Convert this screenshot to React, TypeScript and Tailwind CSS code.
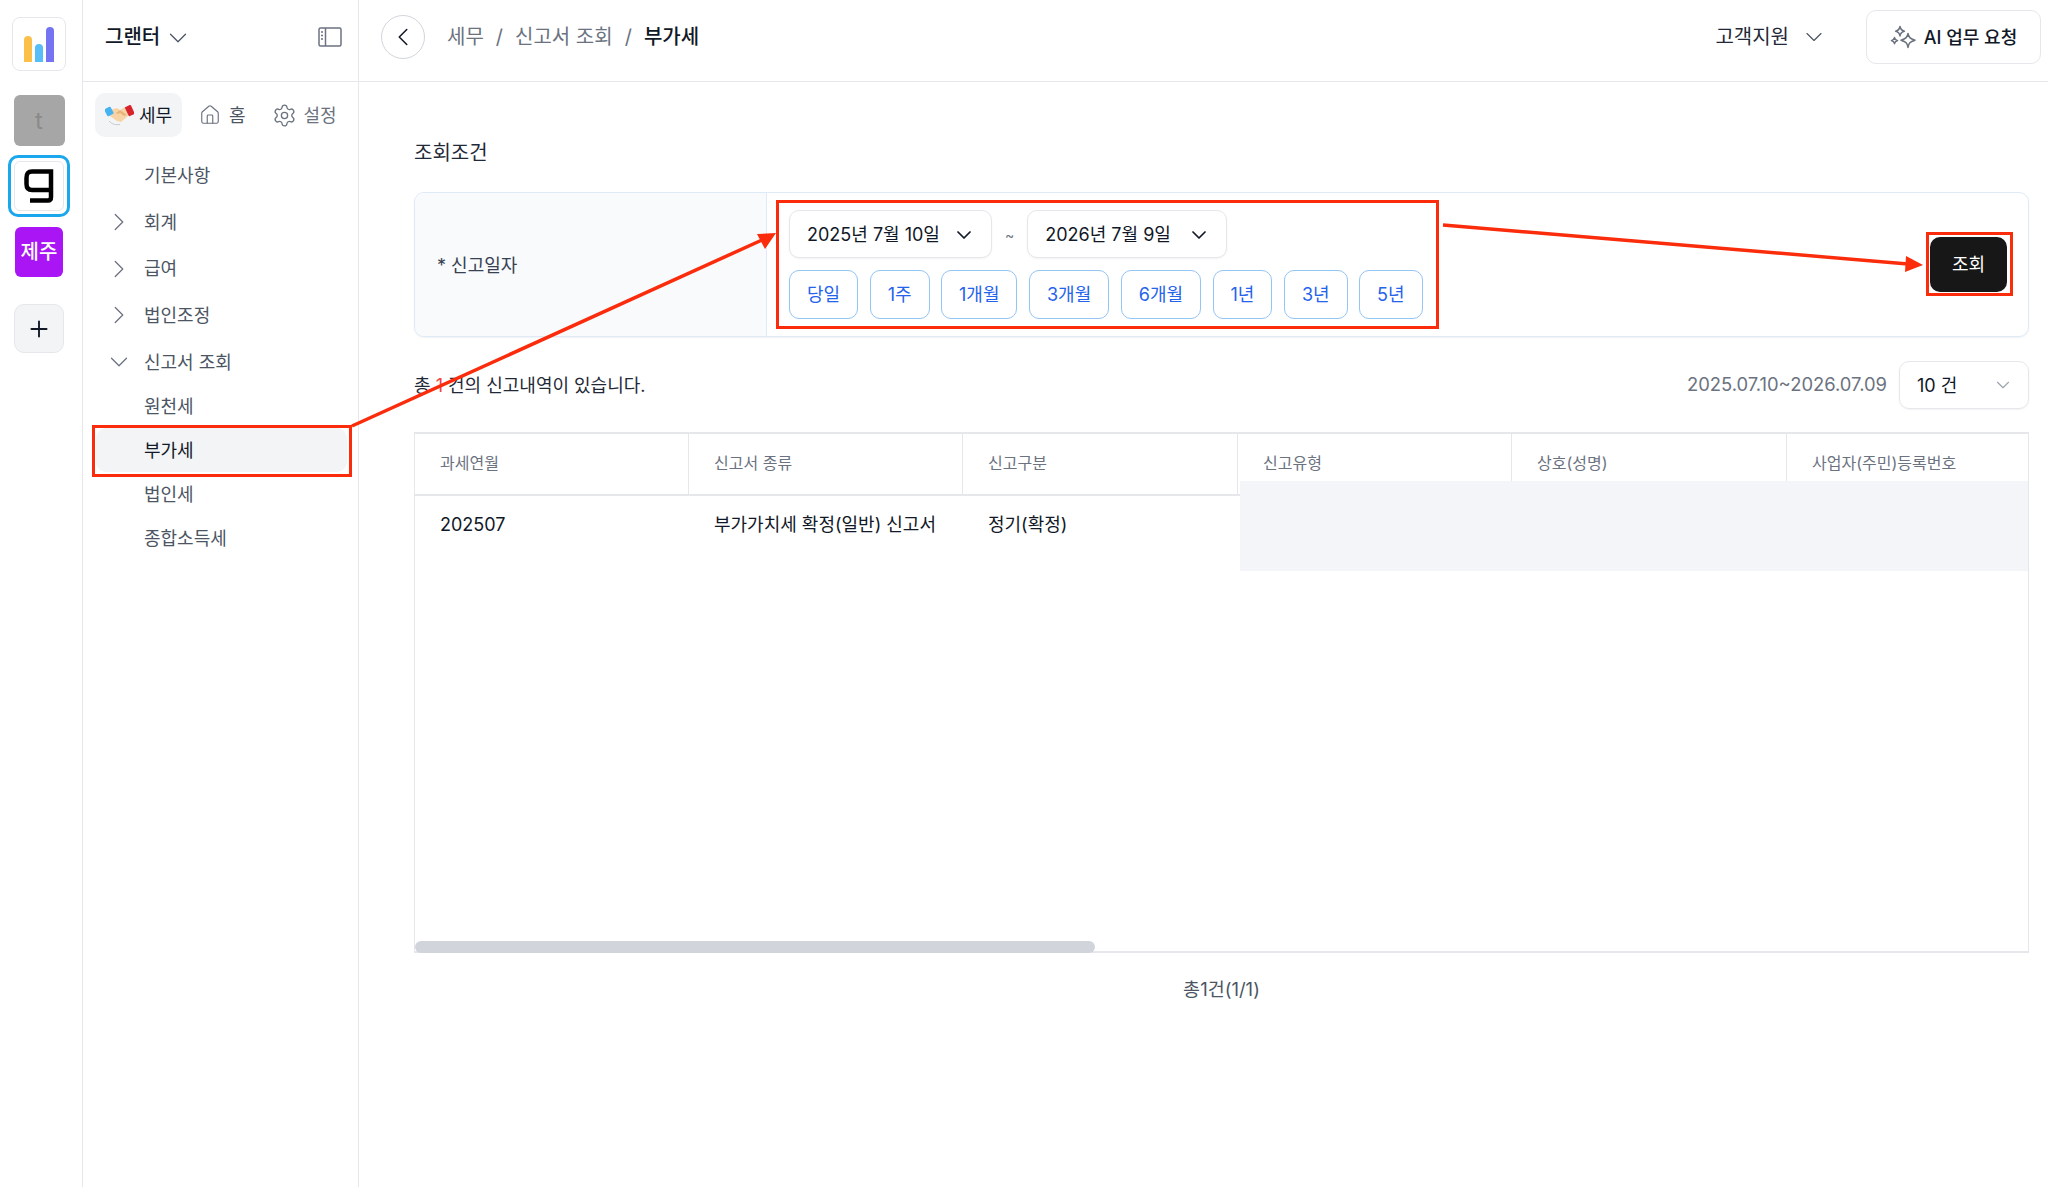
import { ChevronDown, ChevronLeft, ChevronRight, House, Plus, Settings } from "lucide-react";

const menu = [
  { label: "기본사항" },
  { label: "회계", arrow: "right" },
  { label: "급여", arrow: "right" },
  { label: "법인조정", arrow: "right" },
  { label: "신고서 조회", arrow: "down" },
];
const subMenu = ["원천세", "부가세", "법인세", "종합소득세"];
const ranges = ["당일", "1주", "1개월", "3개월", "6개월", "1년", "3년", "5년"];
const columns = ["과세연월", "신고서 종류", "신고구분", "신고유형", "상호(성명)", "사업자(주민)등록번호"];
const row = ["202507", "부가가치세 확정(일반) 신고서", "정기(확정)", "", "", ""];

const RED = "#fb2c0c";

function SparkIcon() {
  return (
    <svg width="26" height="24" viewBox="0 0 26 24" fill="none" stroke="#6b7280" strokeWidth="1.5" strokeLinejoin="round">
      <path d="M10 1.5 C10.6 4.6 11.6 5.6 14.4 6.2 C11.6 6.8 10.6 7.8 10 10.9 C9.4 7.8 8.4 6.8 5.6 6.2 C8.4 5.6 9.4 4.6 10 1.5 Z" />
      <path d="M18 8.5 C18.7 12.2 19.9 13.6 25 15.2 C19.9 16.8 18.7 18.2 18 22.5 C17.3 18.2 16.1 16.8 11 15.2 C16.1 13.6 17.3 12.2 18 8.500 Z" />
      <path d="M4.5 12.5 C4.8 14.4 5.4 15 7.6 15.6 C5.4 16.2 4.8 16.8 4.5 18.7 C4.2 16.8 3.6 16.2 1.4 15.6 C3.6 15 4.2 14.4 4.5 12.5 Z" />
    </svg>
  );
}

function HandshakeIcon() {
  return (
    <svg width="29" height="22" viewBox="0 0 29 22">
      <path d="M5 6 L12 4 L15 6 L20 3 L25 8 L22 13 L16 18 L12 17 L5 12 Z" fill="#f7d3a6" />
      <path d="M11 9 L15 6 L22 11 L19 12 L15 9 L13 10 Z" fill="#e9b47c" />
      <rect x="0.500" y="3.500" width="7" height="8" rx="1" fill="#45b2f2" transform="rotate(-28 4 7.500)" />
      <rect x="21.500" y="1.500" width="6.500" height="10" rx="1" fill="#d6232c" transform="rotate(-25 25 6.500)" />
      <path d="M4 17 C7 20.500 11 21 15 20.500" fill="none" stroke="#c4c9d1" strokeWidth="1" />
    </svg>
  );
}

function PanelIcon() {
  return (
    <svg width="24" height="20" viewBox="0 0 24 20" fill="none" stroke="#6b7280" strokeWidth="1.5">
      <rect x="1" y="1" width="22" height="18" rx="1.5" />
      <path d="M7.5 1 V19" />
      <path d="M3 5 H5 M3 8.5 H5 M3 12 H5" />
    </svg>
  );
}

function Rail() {
  return (
    <aside className="flex w-[83px] shrink-0 flex-col items-center border-r border-[#e5e7eb] pr-[4px]">
      <div className="mt-[17px] flex h-[54px] w-[54px] items-end justify-center gap-[3px] rounded-lg border border-[#e5e7eb] pb-[8px]">
        <span className="h-[26px] w-[8px] rounded-t-sm bg-[#fbbf4a]" />
        <span className="h-[18px] w-[8px] rounded-t-sm bg-[#56bdf9]" />
        <span className="h-[35px] w-[8px] rounded-t-sm bg-[#7474f2]" />
      </div>
      <div className="mt-[24px] flex h-[51px] w-[51px] items-center justify-center rounded-md bg-[#a6a6a6] text-[24px] text-[#8a8a8a]">t</div>
      <div className="mt-[9px] flex h-[62px] w-[62px] items-center justify-center rounded-[10px] border-[3px] border-[#1aa7ec]">
        <div className="flex h-[50px] w-[50px] items-center justify-center rounded-md border border-[#e5e7eb]">
          <svg width="30" height="34" viewBox="0 0 30 34" fill="none" stroke="#000" strokeWidth="4.5">
            <path d="M27 21 H8 C4 21 2.5 19 2.5 15 V9 C2.5 4.500 4 2.500 8 2.500 H27 V28 C27 30.500 26 31.500 24 31.500 H6" />
          </svg>
        </div>
      </div>
      <div className="mt-[10px] flex h-[50px] w-[48px] items-center justify-center rounded-md bg-[#a915f5] text-[20px] font-medium text-white">제주</div>
      <div className="mt-[27px] flex h-[49px] w-[50px] items-center justify-center rounded-[10px] border border-[#e5e7eb] bg-[#f3f4f6]">
        <Plus size={26} strokeWidth={1.75} className="text-[#111827]" />
      </div>
    </aside>
  );
}

function Sidebar() {
  return (
    <aside className="w-[276px] shrink-0 border-r border-[#e5e7eb]">
      <div className="flex h-[82px] items-center justify-between border-b border-[#e5e7eb] pr-[16px] pb-[7px] pl-[22px]">
        <div className="flex items-center gap-[3px]">
          <span className="text-[20px] font-medium text-[#111827]">그랜터</span>
          <ChevronDown size={30} strokeWidth={1} className="mt-[2px] text-[#4b5563]" />
        </div>
        <PanelIcon />
      </div>
      <div className="mt-[11px] flex items-center pl-[12px]">
        <div className="flex h-[44px] w-[87px] items-center gap-[5px] rounded-[10px] bg-[#f3f4f6] pl-[10px]">
          <HandshakeIcon />
          <span className="text-[18px] text-[#111827]">세무</span>
        </div>
        <div className="ml-[17px] flex items-center gap-[8px]">
          <House size={22} strokeWidth={1.25} className="text-[#6b7280]" />
          <span className="text-[18px] text-[#4b5563]">홈</span>
        </div>
        <div className="ml-[26px] flex items-center gap-[7px]">
          <Settings size={25} strokeWidth={1.25} className="text-[#6b7280]" />
          <span className="text-[18px] text-[#6b7280]">설정</span>
        </div>
      </div>
      <nav className="mt-[15px]">
        {menu.map((m) => (
          <div key={m.label} className="relative flex h-[46.7px] items-center pl-[61px] text-[18px] text-[#4b5563] last:text-[#1f2937]">
            {m.arrow === "right" && <ChevronRight size={30} strokeWidth={1} className="absolute left-[21px] text-[#6b7280]" />}
            {m.arrow === "down" && <ChevronDown size={30} strokeWidth={1} className="absolute left-[21px] text-[#6b7280]" />}
            {m.label}
          </div>
        ))}
        <div className="-mt-[1px]">
          {subMenu.map((s) => (
            <div
              key={s}
              className={
                s === "부가세"
                  ? "ml-[13px] flex h-[44px] w-[251px] items-center rounded-[10px] bg-[#f3f4f6] pl-[48px] text-[18px] text-[#111827]"
                  : "ml-[13px] flex h-[44px] w-[251px] items-center pl-[48px] text-[18px] text-[#4b5563]"
              }
            >
              {s}
            </div>
          ))}
        </div>
      </nav>
    </aside>
  );
}

function Header() {
  return (
    <header className="flex h-[82px] items-center justify-between border-b border-[#e5e7eb] pr-[7px] pb-[7px] pl-[22px]">
      <div className="flex items-center">
        <div className="flex h-[44px] w-[44px] items-center justify-center rounded-full border border-[#d1d5db]">
          <ChevronLeft size={30} strokeWidth={1.25} className="text-[#111827]" />
        </div>
        <div className="ml-[22px] flex items-center gap-[12px] text-[20px] text-[#6b7280]">
          <span>세무</span>
          <span>/</span>
          <span>신고서 조회</span>
          <span>/</span>
          <span className="font-medium text-[#111827]">부가세</span>
        </div>
      </div>
      <div className="flex items-center">
        <span className="text-[20px] text-[#1f2937]">고객지원</span>
        <ChevronDown size={28} strokeWidth={1} className="ml-[11px] text-[#4b5563]" />
        <div className="ml-[38px] flex h-[54px] w-[175px] items-center justify-center gap-[8px] rounded-[10px] border border-[#e5e7eb]">
          <SparkIcon />
          <span className="text-[18px] font-medium text-[#111827]">AI 업무 요청</span>
        </div>
      </div>
    </header>
  );
}

function DateSelect({ label, className }: { label: string; className: string }) {
  return (
    <div className={"flex h-[48px] items-center justify-between rounded-[10px] border border-[#e5e7eb] bg-white pt-[1px] pr-[15px] pl-[17px] text-[18px] text-[#111827] shadow-[0_1px_2px_rgba(0,0,0,0.05)] " + className}>
      {label}
      <ChevronDown size={24} strokeWidth={1.75} className="text-[#111827]" />
    </div>
  );
}

function SearchCard() {
  return (
    <div className="flex h-[145px] rounded-[10px] border border-[#deeaf7] shadow-[0_1px_2px_rgba(0,0,0,0.06)]">
      <div className="flex w-[352px] items-center rounded-l-[10px] border-r border-[#deeaf7] bg-[#f8fafc] pt-[1px] pl-[22px] text-[18px] text-[#374151]">
        * 신고일자
      </div>
      <div className="flex flex-1 flex-col gap-[12px] pt-[17px] pl-[22px]">
        <div className="flex items-center">
          <DateSelect label="2025년 7월 10일" className="w-[203px]" />
          <span className="mx-[13px] text-[14px] text-[#6b7280]">~</span>
          <DateSelect label="2026년 7월 9일" className="w-[200px]" />
        </div>
        <div className="flex gap-[11.5px]">
          {ranges.map((r) => (
            <div key={r} className="flex h-[49px] items-center rounded-[10px] border border-[#93c5f5] px-[17px] text-[18px] text-[#2563eb]">
              {r}
            </div>
          ))}
        </div>
      </div>
      <div className="flex items-center pr-[21px]">
        <div className="flex h-[55px] w-[77px] items-center justify-center rounded-[10px] bg-[#171717] text-[18px] text-white">조회</div>
      </div>
    </div>
  );
}

function ResultTable() {
  return (
    <div className="relative mt-[23px] h-[521px] border-x border-b-2 border-[#e5e7eb]">
      <div className="grid grid-cols-[274px_274px_275px_274px_275px_1fr] border-t-2 border-[#e5e7eb]">
        {columns.map((c, i) => (
          <div key={c} className={(i < 5 ? "border-r " : "") + "flex h-[62px] items-center border-b-2 border-[#e5e7eb] pb-[2px] pl-[25px] text-[16px] text-[#6b7280]"}>
            {c}
          </div>
        ))}
        {row.map((v, i) => (
          <div key={i} className="flex h-[56px] items-center pl-[25px] text-[18px] text-[#111827]">
            {v}
          </div>
        ))}
      </div>
      {/* 로딩 중 덮개 */}
      <div className="absolute top-[49px] right-0 left-[825px] h-[90px] bg-[#f3f5f9]" />
      <div className="absolute -bottom-[2px] left-0 h-[12px] w-[680px] rounded-md bg-[#d1d5db]" />
    </div>
  );
}

function Annotations() {
  return (
    <svg className="pointer-events-none absolute inset-0" width="2048" height="1187" fill="none" stroke={RED}>
      <rect x="93.500" y="426.500" width="257" height="49" strokeWidth="3" />
      <rect x="777.500" y="201.500" width="660" height="126" strokeWidth="3" />
      <rect x="1927.500" y="233.500" width="84" height="61" strokeWidth="3" />
      <path d="M352 426 L762 240" strokeWidth="3.5" />
      <path d="M776 233 L757 234 L765 249 Z" fill={RED} stroke="none" />
      <path d="M1443 225 L1908 264" strokeWidth="3.5" />
      <path d="M1923 265 L1906 256 L1905 272 Z" fill={RED} stroke="none" />
    </svg>
  );
}

export default function App() {
  return (
    <div className="relative flex h-screen w-full overflow-hidden bg-white font-['Inter','Noto_Sans_CJK_KR',sans-serif]">
      <Rail />
      <Sidebar />
      <main className="min-w-0 flex-1">
        <Header />
        <div className="pt-[57px] pr-[19px] pl-[55px]">
          <h2 className="mb-[25px] text-[20px] leading-[28px] text-[#1f2937]">조회조건</h2>
          <SearchCard />
          <div className="mt-[24px] flex items-center justify-between">
            <p className="text-[18px] text-[#1f2937]">
              총 <span className="text-[#ef4444]">1</span> 건의 신고내역이 있습니다.
            </p>
            <div className="flex items-center gap-[12px]">
              <span className="text-[18.4px] text-[#6b7280]">2025.07.10~2026.07.09</span>
              <div className="flex h-[48px] w-[130px] items-center justify-between rounded-[10px] border border-[#e5e7eb] pr-[14px] pl-[17px] text-[18px] text-[#111827] shadow-[0_1px_2px_rgba(0,0,0,0.05)]">
                10 건
                <ChevronDown size={22} strokeWidth={1.25} className="text-[#9ca3af]" />
              </div>
            </div>
          </div>
          <ResultTable />
          <p className="mt-[24px] text-center text-[18.5px] leading-[24px] text-[#4b5563]">총1건(1/1)</p>
        </div>
      </main>
      <Annotations />
    </div>
  );
}
